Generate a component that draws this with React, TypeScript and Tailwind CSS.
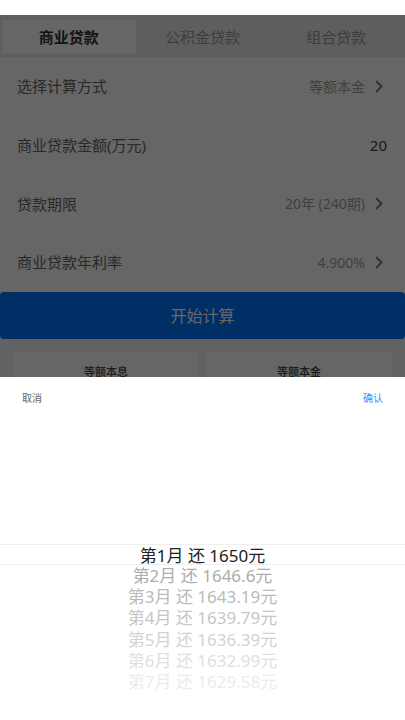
import React from "react";

const rows: { label: string; value: string; chevron: boolean; dark?: boolean }[] = [
  { label: "选择计算方式", value: "等额本金", chevron: true },
  { label: "商业贷款金额(万元)", value: "20", chevron: false, dark: true },
  { label: "贷款期限", value: "20年 (240期)", chevron: true },
  { label: "商业贷款年利率", value: "4.900%", chevron: true },
];

const items = [
  { t: "第1月 还 1650元", c: "text-[#222222]" },
  { t: "第2月 还 1646.6元", c: "text-[#adadad]" },
  { t: "第3月 还 1643.19元", c: "text-[#bababa]" },
  { t: "第4月 还 1639.79元", c: "text-[#c6c6c6]" },
  { t: "第5月 还 1636.39元", c: "text-[#d3d3d3]" },
  { t: "第6月 还 1632.99元", c: "text-[#e0e0e0]" },
  { t: "第7月 还 1629.58元", c: "text-[#ececec]" },
];

function Chevron() {
  return (
    <svg width="8" height="13" viewBox="0 0 8 13" className="ml-[10px]">
      <polyline points="1.5,1.5 6.5,6.5 1.5,11.5" fill="none" stroke="#7a7a7a" strokeWidth="1.8" strokeLinecap="round" strokeLinejoin="round" />
    </svg>
  );
}

export default function App() {
  return (
    <div
      className="relative w-[405px] h-[720px] overflow-hidden bg-white"
      style={{ fontFamily: '"Noto Sans", "Noto Sans CJK SC", sans-serif' }}
    >
      <div className="h-[15px] bg-white" />
      <div className="bg-[#f4f4f4] h-[705px]">
        {/* tabs */}
        <div className="grid grid-cols-3 bg-[#ececec] px-[2px] pt-[5px] pb-[3px]">
          <div className="h-[34px] flex items-center justify-center bg-white text-[15px] font-bold text-[#333333]">商业贷款</div>
          <div className="h-[34px] flex items-center justify-center text-[15px] text-[#999999]">公积金贷款</div>
          <div className="h-[34px] flex items-center justify-center text-[15px] text-[#999999]">组合贷款</div>
        </div>
        {/* form rows */}
        <div className="bg-white">
          {rows.map((r) => (
            <div key={r.label} className="h-[58.75px] flex items-center justify-between pl-[17px] pr-[22px]">
              <span className="text-[15px] text-[#666666]">{r.label}</span>
              <span className={`flex items-center ${r.dark ? "text-[#444444] text-[15px] -mr-[4px]" : "text-[14px] text-[#a0a0a0]"}`}>
                {r.value}
                {r.chevron && <Chevron />}
              </span>
            </div>
          ))}
        </div>
        <button className="w-full h-[47px] rounded-[4px] bg-[#0076ff] text-white text-[16px] flex items-center justify-center">
          开始计算
        </button>
        <div className="flex gap-[5px] px-[12px] mt-[11px]">
          <div className="flex-1 h-[80px] bg-white border border-[#f2f2f2] rounded-[2px] pt-[13px] text-center text-[11px] font-medium text-[#444444]">等额本息</div>
          <div className="flex-1 h-[80px] bg-white border border-[#f2f2f2] rounded-[2px] pt-[13px] text-center text-[11px] font-medium text-[#444444]">等额本金</div>
        </div>
      </div>

      {/* mask */}
      <div className="absolute left-0 right-0 top-[15px] bottom-0 bg-black/60" />

      {/* bottom sheet */}
      <div className="absolute left-0 right-0 top-[377px] bottom-0 bg-white flex flex-col">
        <div className="h-[42px] flex items-center justify-between px-[22px] text-[10px]">
          <span className="text-[#666666]">取消</span>
          <span className="text-[#3f8ef5]">确认</span>
        </div>
        <div className="pt-[124.5px] flex flex-col">
          {items.map((it, i) => (
            <div
              key={it.t}
              className={`h-[21.33px] leading-[21.33px] text-center text-[17px] ${it.c} ${i === 0 ? "border-y border-[#eeeeee]" : ""}`}
            >
              {it.t}
            </div>
          ))}
        </div>
      </div>
    </div>
  );
}
